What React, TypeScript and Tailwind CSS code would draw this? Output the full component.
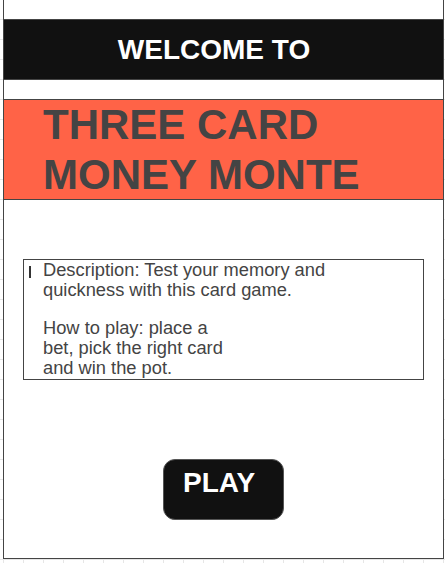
export default function App() {
  return (
    <div
      className="w-[445px] h-[563px] overflow-hidden bg-white bg-[linear-gradient(to_right,#e6e6e6_1px,transparent_1px),linear-gradient(to_bottom,#e6e6e6_1px,transparent_1px)] bg-[size:20px_20px] bg-[position:3px_19px]"
      style={{ fontFamily: '"Liberation Sans", Arial, sans-serif' }}
    >
      <main className="ml-[3px] w-[441px] h-[559px] bg-white border-l border-r border-b border-[#444] pt-[19px] flex flex-col">
        <header className="h-[61px] bg-[#111] border-y border-[#444] flex items-center justify-center pr-[19px]">
          <h2 className="text-white font-bold text-[28px] leading-[32px]">WELCOME TO</h2>
        </header>

        <section className="mt-[19px] h-[101px] bg-[#ff6347] border-y border-[#444] pl-[39px]">
          <h1 className="text-[#444] font-bold text-[42px] leading-[50px]">
            THREE CARD
            <br />
            MONEY MONTE
          </h1>
        </section>

        <div className="relative mt-[59px] ml-[19px] w-[401px] h-[121px] border border-[#444] pl-[19px] text-[#444] text-[18.3px] leading-[20px]">
          <span className="absolute left-[5px] top-[6px] w-[1.5px] h-[12px] bg-[#333]"></span>
          <p className="w-[305px]">Description: Test your memory and quickness with this card game.</p>
          <p className="mt-[18px] w-[188px]">How to play: place a bet, pick the right card and win the pot.</p>
        </div>

        <div className="mt-[79px] self-center w-[121px] h-[61px] rounded-[12px] bg-[#111] border border-[#555] pl-[19px] pt-[7px]">
          <span className="block text-white font-bold text-[28px] leading-[32px]">PLAY</span>
        </div>
      </main>
    </div>
  )
}
